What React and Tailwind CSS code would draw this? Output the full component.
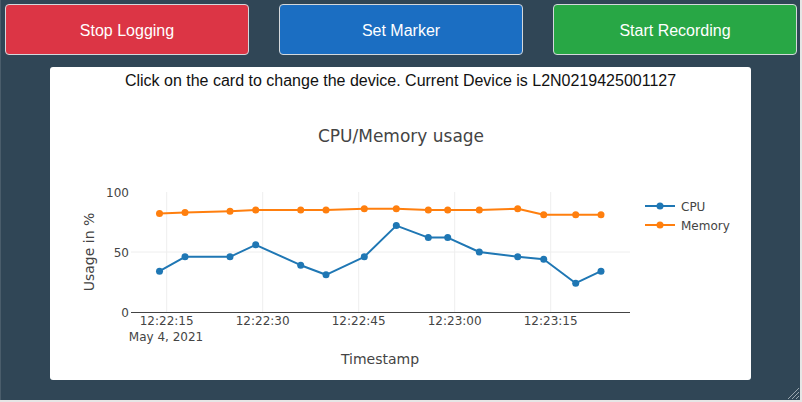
import React from 'react';

// --- chart data (pixel x positions of samples, values in %) ---
const xs = [159.5, 185, 230, 255.7, 300.7, 326, 364.3, 396.3, 428.3, 447.7, 479.3, 517.7, 543.7, 575.7, 601];
const cpu = [34, 46, 46, 56, 39, 31, 46, 72, 62, 62, 50, 46, 44, 24, 34];
const mem = [82, 83, 84, 85, 85, 85, 86, 86, 85, 85, 85, 86, 81, 81, 81];

const yOf = (v) => 312 - v * 1.2;
const toPoints = (vals) => vals.map((v, i) => `${xs[i]},${yOf(v)}`).join(' ');

const xTicks = [
  { x: 166.7, label: '12:22:15' },
  { x: 262.7, label: '12:22:30' },
  { x: 358.7, label: '12:22:45' },
  { x: 454.7, label: '12:23:00' },
  { x: 550.7, label: '12:23:15' },
];

const Series = ({ vals, color }) => (
  <g>
    <polyline points={toPoints(vals)} fill="none" stroke={color} strokeWidth="2" strokeLinejoin="round" />
    {vals.map((v, i) => (
      <circle key={i} cx={xs[i]} cy={yOf(v)} r="3.5" fill={color} />
    ))}
  </g>
);

const UsageChart = () => (
  <svg width="701" height="289" viewBox="50 91 701 289" style={{ fontFamily: '"DejaVu Sans", Verdana, sans-serif' }}>
    {/* grid */}
    {xTicks.map((t) => (
      <line key={t.x} x1={t.x} y1="192" x2={t.x} y2="312" stroke="#eeeeee" strokeWidth="1" />
    ))}
    <line x1="131" y1="252" x2="630" y2="252" stroke="#eeeeee" strokeWidth="1" />
    <line x1="131" y1="312.5" x2="630" y2="312.5" stroke="#444444" strokeWidth="1" />

    <Series vals={mem} color="#ff7f0e" />
    <Series vals={cpu} color="#1f77b4" />

    {/* y ticks */}
    <g fontSize="12" fill="#444444" textAnchor="end">
      <text x="129" y="196.5">100</text>
      <text x="129" y="256.5">50</text>
      <text x="129" y="316.5">0</text>
    </g>
    {/* x ticks */}
    <g fontSize="12" fill="#444444" textAnchor="middle">
      {xTicks.map((t) => (
        <text key={t.label} x={t.x} y="324.5">{t.label}</text>
      ))}
      <text x="166" y="340.5">May 4, 2021</text>
    </g>

    <text x="401" y="142" fontSize="17" fill="#444444" textAnchor="middle">CPU/Memory usage</text>
    <text x="380" y="364" fontSize="14" fill="#444444" textAnchor="middle">Timestamp</text>
    <text transform="translate(93.5 252) rotate(-90)" fontSize="14" fill="#444444" textAnchor="middle">Usage in %</text>

    {/* legend */}
    <g>
      <line x1="645" y1="206" x2="675" y2="206" stroke="#1f77b4" strokeWidth="2" />
      <circle cx="660" cy="206" r="3.5" fill="#1f77b4" />
      <text x="681" y="210.5" fontSize="12" fill="#444444">CPU</text>
      <line x1="645" y1="225" x2="675" y2="225" stroke="#ff7f0e" strokeWidth="2" />
      <circle cx="660" cy="225" r="3.5" fill="#ff7f0e" />
      <text x="681" y="229.5" fontSize="12" fill="#444444">Memory</text>
    </g>
  </svg>
);

const ActionButton = ({ label, color }) => (
  <button className={`w-[244px] h-[51px] pt-[2px] rounded-[4px] border border-[#d4d8dc] text-white text-[16px] ${color}`}>
    {label}
  </button>
);

export default function App() {
  return (
    <div className="w-[802px] h-[402px] bg-[#e6e6e6]" style={{ fontFamily: '"Liberation Sans", Arial, sans-serif' }}>
      <div className="relative w-[800px] h-[400px] bg-[#304656] border-l border-[#4a5d6b]">
        <div className="flex gap-[30px] pl-[4px] pt-[4px]">
          <ActionButton label="Stop Logging" color="bg-[#dc3545]" />
          <ActionButton label="Set Marker" color="bg-[#1b6ec2]" />
          <ActionButton label="Start Recording" color="bg-[#28a745]" />
        </div>

        <div className="ml-[49px] mt-[12px] w-[701px] h-[313px] bg-white rounded-[3px] overflow-hidden">
          <p className="h-[24px] pt-[2px] leading-[24px] text-center text-[16px] text-[#111]">
            Click on the card to change the device. Current Device is L2N0219425001127
          </p>
          <UsageChart />
        </div>

        {/* resize grip */}
        <svg className="absolute right-0 bottom-0" width="14" height="14" viewBox="0 0 14 14">
          <line x1="13" y1="2" x2="2" y2="13" stroke="#9aa6ae" strokeWidth="1" />
          <line x1="13" y1="6" x2="6" y2="13" stroke="#9aa6ae" strokeWidth="1" />
          <line x1="13" y1="10" x2="10" y2="13" stroke="#9aa6ae" strokeWidth="1" />
        </svg>
      </div>
    </div>
  );
}
